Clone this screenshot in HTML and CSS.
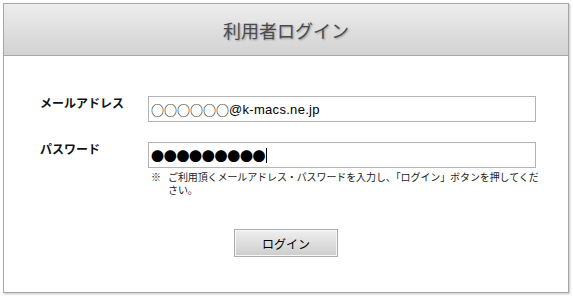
FILE: index.html
```html
<!DOCTYPE html>
<html lang="ja">
<head>
    <meta charset="UTF-8">
    <meta name="viewport" content="width=device-width, initial-scale=1.0">
    <title>利用者ログイン</title>
    <link rel="stylesheet" href="styles.css">
</head>
<body>
    <div class="login-panel">
        <div class="login-header">
            <h1>利用者ログイン</h1>
        </div>
        <div class="login-body">
            <div class="form-row">
                <label class="form-label">メールアドレス</label>
                <div class="field"><span class="marks">○○○○○○</span>@k-macs.ne.jp</div>
            </div>
            <div class="form-row">
                <label class="form-label">パスワード</label>
                <div class="field"><span class="dots">●●●●●●●●●</span><span class="caret"></span></div>
            </div>
            <div class="note">
                <span class="note-mark">※</span>
                <span class="note-text">ご利用頂くメールアドレス・パスワードを入力し、「ログイン」ボタンを押してください。</span>
            </div>
            <div class="actions">
                <button class="login-button">ログイン</button>
            </div>
        </div>
    </div>
</body>
</html>
```

FILE: styles.css
```css
body {
    margin: 0;
    padding: 3px;
    background-color: #fff;
    font-family: 'Noto Sans CJK JP', sans-serif;
    color: #000;
}

.login-panel {
    width: 564px;
    border: 1px solid #a8a8a8;
    box-shadow: 1px 1px 2px rgba(0, 0, 0, 0.25);
    background-color: #fff;
}

.login-header {
    height: 51px;
    display: flex;
    align-items: center;
    justify-content: center;
    background: linear-gradient(#ededed, #d2d2d2);
    border-bottom: 1px solid #a8a8a8;
}

.login-header h1 {
    margin: 0;
    font-size: 18px;
    font-weight: normal;
    color: #4b4b4b;
    text-shadow: 1px 1px 2px rgba(0, 0, 0, 0.3);
    line-height: 1;
    padding-top: 1px;
}

.login-body {
    padding: 40px 0 35px 36px;
}

.form-row {
    display: grid;
    grid-template-columns: 108px 388px;
    margin-bottom: 20px;
}

.form-row + .form-row {
    margin-bottom: 0;
}

.form-label {
    font-size: 12px;
    font-weight: bold;
    line-height: 12px;
    padding-top: 1px;
    color: #111;
}

.field {
    box-sizing: border-box;
    height: 26px;
    border: 1px solid #b4b4b4;
    padding: 0 0 0 2px;
    display: flex;
    align-items: center;
    font-family: 'Liberation Sans', sans-serif;
    font-size: 13px;
    letter-spacing: 0.3px;
}

.marks {
    font-family: 'Noto Sans CJK JP', sans-serif;
    font-size: 13px;
    letter-spacing: 0;
}

.dots {
    font-family: 'Noto Sans CJK JP', sans-serif;
    font-size: 13px;
    letter-spacing: -0.3px;
}

.caret {
    width: 1px;
    height: 15px;
    background-color: #000;
    margin-left: 1px;
}

.note {
    display: flex;
    margin: 2px 0 0 111px;
    width: 400px;
    font-size: 10px;
    line-height: 13px;
    color: #222;
}

.note-mark {
    width: 17px;
    flex: none;
}

.note-text {
    width: 380px;
    letter-spacing: -0.1px;
}

.actions {
    display: flex;
    justify-content: center;
    margin: 33px 0 0 -36px;
}

.login-button {
    width: 104px;
    height: 28px;
    border: 1px solid #adadad;
    box-shadow: inset 0 0 0 1px #f6f6f6;
    background: linear-gradient(#efefef, #cdcdcd);
    font-family: 'Noto Sans CJK JP', sans-serif;
    font-size: 12px;
    color: #000;
    padding: 0;
    cursor: pointer;
}
```
